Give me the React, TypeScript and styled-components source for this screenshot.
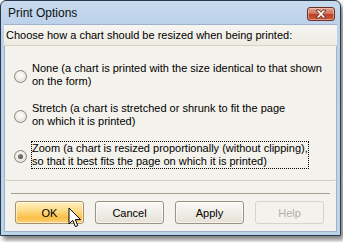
import React from 'react';
import styled, { createGlobalStyle } from 'styled-components';

const GlobalStyle = createGlobalStyle`
  html, body {
    margin: 0;
    padding: 0;
    background: #ffffff;
  }
  body {
    font-family: "Liberation Sans", Arial, sans-serif;
    font-size: 11px;
    color: #000;
  }
`;

const Page = styled.div`
  width: 343px;
  height: 242px;
  padding: 0;
  overflow: hidden;
`;

const Window = styled.div`
  position: relative;
  width: 333px;
  height: 231px;
  display: flex;
  flex-direction: column;
  border: 1px solid #28384c;
  border-radius: 6px 6px 0 0;
  background: linear-gradient(#c7daee, #bcd2ea 24px, #bdd3ea);
  box-shadow: 3px 4px 5px rgba(0, 0, 0, 0.5);
  padding: 0 3px 3px 3px;
`;

const TitleBar = styled.div`
  height: 23px;
  display: flex;
  align-items: center;
  justify-content: space-between;
  padding: 0 2px 0 4px;
  flex-shrink: 0;
`;

const Title = styled.span`
  font-family: "Liberation Sans", Arial, sans-serif;
  font-size: 12px;
  color: #101010;
  margin-top: 1px;
`;

const CloseButton = styled.div`
  width: 26px;
  height: 12px;
  margin-top: 2px;
  border: 1px solid #6a2e24;
  border-radius: 3px;
  background: linear-gradient(#e2a08f, #d0705a 50%, #bb3f24 51%, #c95a3d);
  display: flex;
  align-items: center;
  justify-content: center;
  box-shadow: inset 0 0 0 1px rgba(255, 220, 210, 0.5);
`;

const Client = styled.div`
  flex: 1;
  display: flex;
  flex-direction: column;
  background: #f4f2ec;
  border: 1px solid #9fb4cc;
`;

const Panel = styled.div`
  height: 155px;
  display: flex;
  flex-direction: column;
  border-bottom: 1px solid #d4cec2;
  border-radius: 0 0 4px 4px;
  margin: 0 -1px;
`;

const Header = styled.div`
  height: 20px;
  display: flex;
  align-items: center;
  padding-left: 2px;
  background: linear-gradient(#f7f5f0, #eeebe3);
  border-bottom: 1px solid #d9d3c7;
`;

const Options = styled.div`
  display: flex;
  flex-direction: column;
  gap: 12px;
  padding: 15px 0 0 10px;
`;

const OptionRow = styled.div`
  display: flex;
  align-items: center;
  gap: 4px;
`;

const RadioCircle = styled.span<{ checked?: boolean }>`
  width: 11px;
  height: 11px;
  flex-shrink: 0;
  margin-top: 2px;
  border-radius: 50%;
  border: 1px solid #8b8478;
  background: radial-gradient(circle at 50% 40%, #ffffff, #e9e5dc 70%, #d6d0c4);
  display: flex;
  align-items: center;
  justify-content: center;
  &::after {
    content: '';
    display: ${({ checked }) => (checked ? 'block' : 'none')};
    width: 5px;
    height: 5px;
    border-radius: 50%;
    background: radial-gradient(circle at 40% 35%, #8c8a86, #3b3a38);
  }
`;

const OptionText = styled.span<{ focused?: boolean }>`
  line-height: 13px;
  padding: 1px;
  outline: ${({ focused }) => (focused ? '1px dotted #000' : 'none')};
  outline-offset: -1px;
`;

const Separator = styled.div`
  height: 1px;
  margin: 12px 6px 0 6px;
  background: #a89e8e;
`;

const ButtonRow = styled.div`
  display: flex;
  gap: 11px;
  padding: 7px 0 0 10px;
`;

const Button = styled.div<{ variant?: 'default' | 'hot' | 'disabled' }>`
  width: 67px;
  height: 21px;
  display: flex;
  align-items: center;
  justify-content: center;
  border-radius: 3px;
  font-size: 11px;
  border: 1px solid
    ${({ variant }) =>
      variant === 'hot' ? '#a9906a' : variant === 'disabled' ? '#d9d3c8' : '#9e9283'};
  color: ${({ variant }) => (variant === 'disabled' ? '#b4aea4' : '#000')};
  background: ${({ variant }) =>
    variant === 'hot'
      ? 'linear-gradient(#fff1c4, #fddc86 40%, #fbbf48 75%, #fcd07a)'
      : variant === 'disabled'
      ? '#f4f2ec'
      : 'linear-gradient(#fbfaf7, #f0ede6 50%, #e6e1d6)'};
  box-shadow: ${({ variant }) =>
    variant === 'disabled' ? 'none' : 'inset 0 0 0 1px rgba(255,255,255,0.6)'};
`;

const Cursor = styled.svg`
  position: absolute;
  left: 67px;
  top: 206px;
`;

const CloseIcon = () => (
  <svg width="14" height="10" viewBox="0 0 14 10">
    <path
      d="M2 1 L5 1 L7 3.3 L9 1 L12 1 L8.7 5 L12 9 L9 9 L7 6.7 L5 9 L2 9 L5.3 5 Z"
      fill="#ffffff"
      stroke="#5a2418"
      strokeWidth="0.8"
      strokeLinejoin="round"
    />
  </svg>
);

const options = [
  {
    lines: ['None (a chart is printed with the size identical to that shown', 'on the form)'],
    checked: false,
  },
  {
    lines: ['Stretch (a chart is stretched or shrunk to fit the page', 'on which it is printed)'],
    checked: false,
  },
  {
    lines: [
      'Zoom (a chart is resized proportionally (without clipping),',
      'so that it best fits the page on which it is printed)',
    ],
    checked: true,
  },
];

export default function App() {
  return (
    <Page>
      <GlobalStyle />
      <Window>
        <TitleBar>
          <Title>Print Options</Title>
          <CloseButton>
            <CloseIcon />
          </CloseButton>
        </TitleBar>
        <Client>
          <Panel>
            <Header>Choose how a chart should be resized when being printed:</Header>
            <Options>
              {options.map((o, i) => (
                <OptionRow key={i}>
                  <RadioCircle checked={o.checked} />
                  <OptionText focused={o.checked}>
                    {o.lines[0]}
                    <br />
                    {o.lines[1]}
                  </OptionText>
                </OptionRow>
              ))}
            </Options>
          </Panel>
          <Separator />
          <ButtonRow>
            <Button variant="hot">OK</Button>
            <Button>Cancel</Button>
            <Button>Apply</Button>
            <Button variant="disabled">Help</Button>
          </ButtonRow>
        </Client>
        <Cursor width="14" height="22" viewBox="0 0 14 22">
          <path
            d="M1 1 L1 17 L4.8 13.4 L7.4 19.6 L9.8 18.6 L7.3 12.6 L12.5 12.6 Z"
            fill="#ffffff"
            stroke="#000000"
            strokeWidth="1"
            strokeLinejoin="miter"
          />
        </Cursor>
      </Window>
    </Page>
  );
}
